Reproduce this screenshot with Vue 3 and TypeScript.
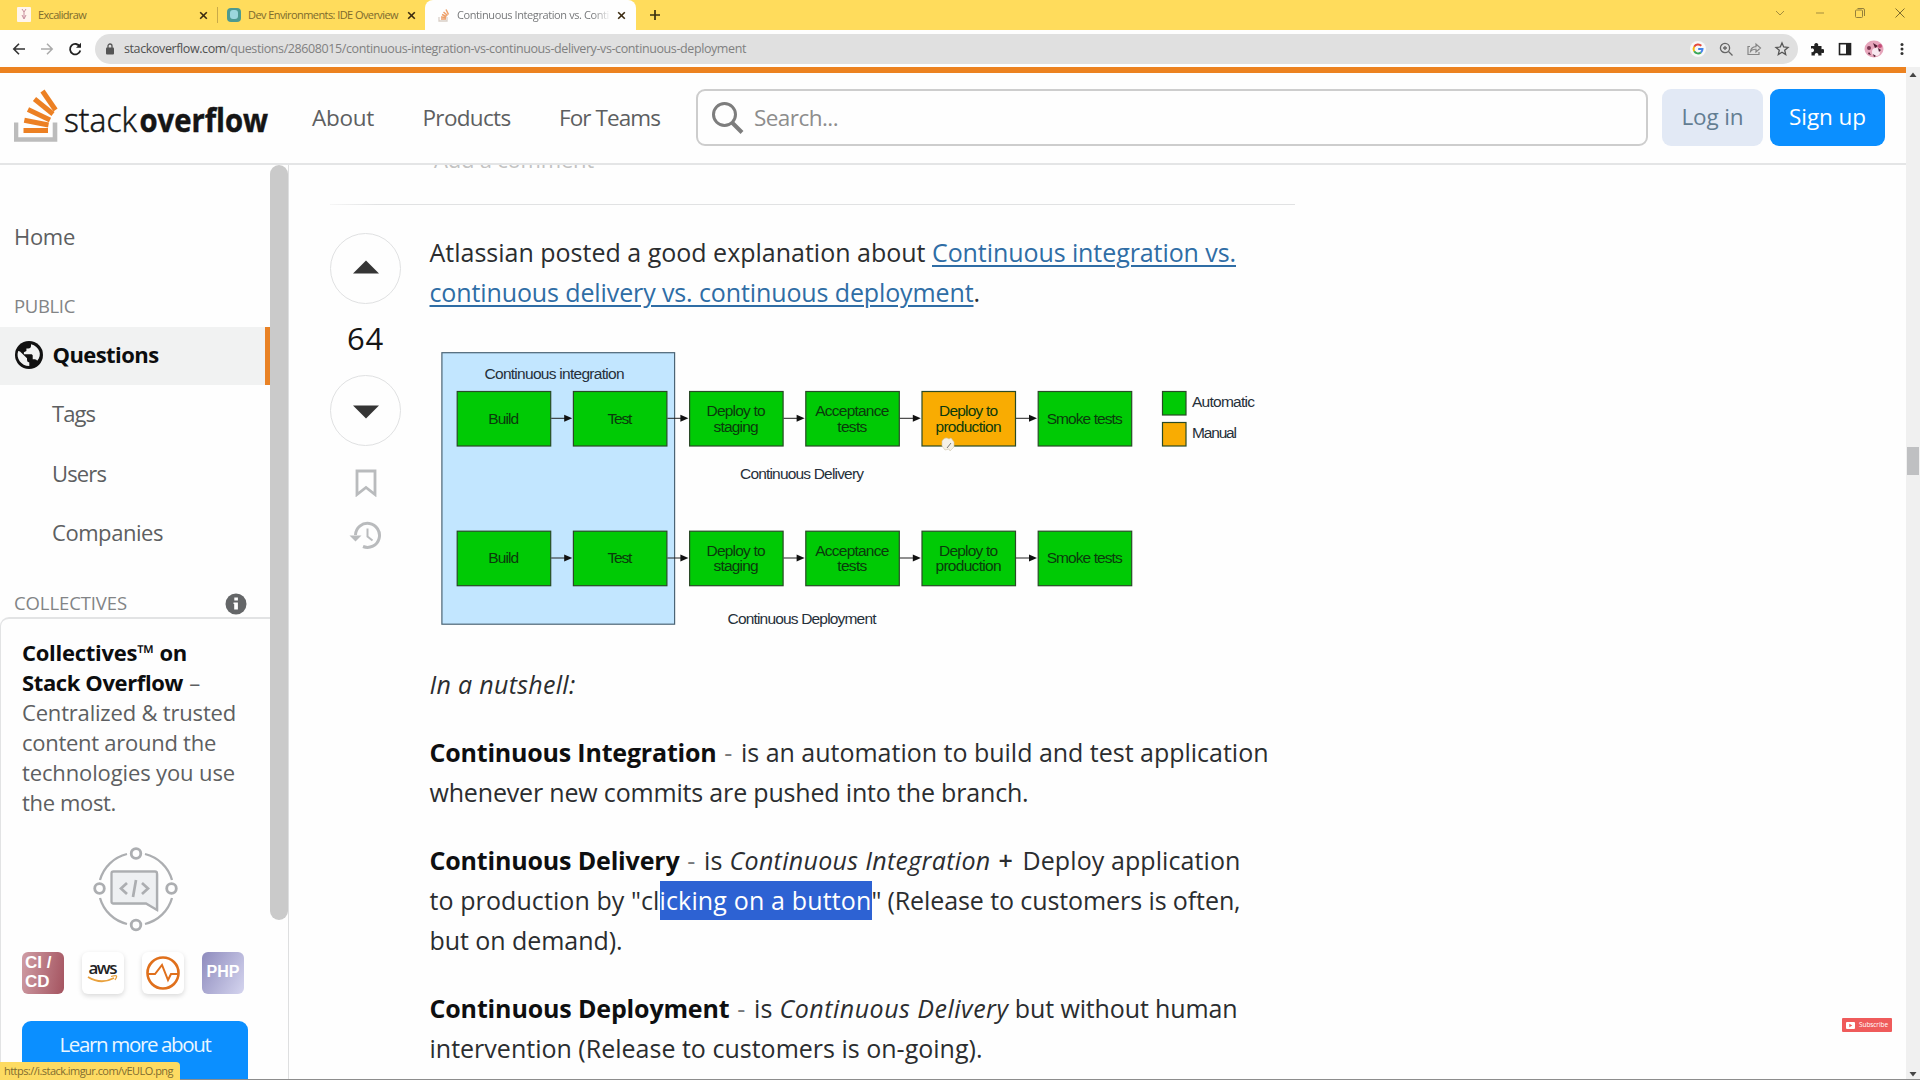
<script setup lang="ts">
import type { Directive } from 'vue'

// Tracks a run of text so that it fills the given measure in pixels.
const vFit: Directive<HTMLElement, number> = {
  mounted(el, { value }) {
    const natural = el.getBoundingClientRect().width
    const count = (el.textContent ?? '').length
    if (count > 0) el.style.letterSpacing = `${(value - natural) / count}px`
  },
}

interface Run { text: string; width: number; kind?: 'b' | 'i' | 'a' | 'sel' | 'dash' | 'plus-sign' }
type Line = Run[]

const intro: Line[] = [
  [
    { text: 'Atlassian posted a good explanation about ', width: 502.5 },
    { text: 'Continuous integration vs.', width: 304, kind: 'a' },
  ],
  [
    { text: 'continuous delivery vs. continuous deployment', width: 544, kind: 'a' },
    { text: '.', width: 7 },
  ],
]

const paragraphs: Line[][] = [
  [[{ text: 'In a nutshell:', width: 146, kind: 'i' }]],
  [
    [
      { text: 'Continuous Integration', width: 287, kind: 'b' },
      { text: ' - ', width: 24.5, kind: 'dash' },
      { text: 'is an automation to build and test application', width: 527.5 },
    ],
    [{ text: 'whenever new commits are pushed into the branch.', width: 599 }],
  ],
  [
    [
      { text: 'Continuous Delivery', width: 250, kind: 'b' },
      { text: ' - ', width: 24.5, kind: 'dash' },
      { text: 'is ', width: 25.5 },
      { text: 'Continuous Integration', width: 261, kind: 'i' },
      { text: ' + ', width: 32, kind: 'plus-sign' },
      { text: 'Deploy application', width: 218 },
    ],
    [
      { text: 'to production by "cl', width: 230 },
      { text: 'icking on a button', width: 212, kind: 'sel' },
      { text: '" ', width: 16 },
      { text: '(Release to customers is often,', width: 353 },
    ],
    [{ text: 'but on demand).', width: 193 }],
  ],
  [
    [
      { text: 'Continuous Deployment', width: 300, kind: 'b' },
      { text: ' - ', width: 24.5, kind: 'dash' },
      { text: 'is ', width: 25.5 },
      { text: 'Continuous Delivery', width: 229, kind: 'i' },
      { text: ' but without human', width: 229 },
    ],
    [{ text: 'intervention (Release to customers is on-going).', width: 553 }],
  ],
]

const tabs = [
  { id: 'excalidraw', title: 'Excalidraw', width: 48 },
  { id: 'dev', title: 'Dev Environments: IDE Overview', width: 150 },
  { id: 'so', title: 'Continuous Integration vs. Conti', width: 152 },
]

const nav = [
  { label: 'About', width: 62 },
  { label: 'Products', width: 88 },
  { label: 'For Teams', width: 101 },
]

const subItems = [
  { label: 'Tags', width: 43 },
  { label: 'Users', width: 54 },
  { label: 'Companies', width: 111 },
]

interface Stage { lines: string[]; widths: number[] }
const stages: Stage[] = [
  { lines: ['Build'], widths: [31] },
  { lines: ['Test'], widths: [25] },
  { lines: ['Deploy to', 'staging'], widths: [59, 45] },
  { lines: ['Acceptance', 'tests'], widths: [74, 30] },
  { lines: ['Deploy to', 'production'], widths: [59, 66] },
  { lines: ['Smoke tests'], widths: [76] },
]
const rows = [
  { y: 51.5, manual: 4 },
  { y: 191.2, manual: -1 },
]
const stageX = (i: number) => 27.2 + i * 116.2
const lineY = (s: Stage, j: number) => (s.lines.length === 1 ? 32.3 : 24.6 + j * 15.7)
</script>

<template>
  <div class="screen">
    <div class="tabstrip">
      <div v-for="t in tabs" :key="t.id" class="tab" :class="t.id">
        <svg v-if="t.id === 'excalidraw'" class="fav" width="14" height="16" viewBox="0 0 14 16">
          <rect width="14" height="15" rx="1" fill="#fff5ee" />
          <path d="M5 2l2 3 2-3M7 5v6M5 8l2 4 2-4" stroke="#c88d9d" fill="none" />
        </svg>
        <svg v-else-if="t.id === 'dev'" class="fav" width="14" height="16" viewBox="0 0 14 16">
          <rect y="1" width="14" height="14" rx="4" fill="#4d9a91" />
          <rect x="3" y="3" width="8" height="9" rx="3" fill="#9bd7dd" />
        </svg>
        <svg v-else class="fav" width="12" height="14" viewBox="0 0 12 14">
          <path d="M1 9v4h8V9" stroke="#d9cfc8" stroke-width="1.3" fill="none" />
          <path d="M3 11h5M3 9l5 .6M4 6.5l4.5 2M5.500 4l4 3.500M8 1.500l2.500 5" stroke="#eda06a" stroke-width="1.500" />
        </svg>
        <div class="title"><span v-fit="t.width">{{ t.title }}</span></div>
        <svg class="x" width="9" height="9" viewBox="0 0 9 9"><path d="M1.200 1.200l6.600 6.600M7.800 1.200L1.200 7.800" stroke="#3a2a10" stroke-width="1.600" /></svg>
      </div>
      <svg class="plus" width="12" height="12" viewBox="0 0 12 12"><path d="M6 1v10M1 6h10" stroke="#3b3011" stroke-width="1.700" /></svg>
      <div class="window-buttons">
        <svg width="12" height="12" viewBox="0 0 12 12"><path d="M2 4l4 4 4-4" fill="none" stroke="#a58d3c" /></svg>
        <svg width="12" height="12" viewBox="0 0 12 12"><path d="M2 6h8" stroke="#a58d3c" /></svg>
        <svg width="12" height="12" viewBox="0 0 12 12"><rect x="1.500" y="3" width="7" height="7.500" rx="1" fill="none" stroke="#94803b" /><path d="M3.500 1.500h5.500q1.500 0 1.500 1.500v6" fill="none" stroke="#94803b" /></svg>
        <svg width="12" height="12" viewBox="0 0 12 12"><path d="M1.500 1.500l9 9M10.500 1.500l-9 9" stroke="#806d2c" /></svg>
      </div>
    </div>

    <div class="toolbar">
      <svg class="nav-icon" width="14" height="14" viewBox="0 0 14 14"><path d="M13 7H2M7 1.800L1.800 7 7 12.200" fill="none" stroke="#333" stroke-width="1.600" /></svg>
      <svg class="nav-icon" width="14" height="14" viewBox="0 0 14 14"><path d="M1 7h11M7 1.800L12.200 7 7 12.200" fill="none" stroke="#aaa" stroke-width="1.500" /></svg>
      <svg class="nav-icon" width="14" height="14" viewBox="0 0 14 14"><path d="M11.800 4.600A5.200 5.200 0 1 0 12.300 8.500" fill="none" stroke="#222" stroke-width="1.800" /><path d="M13 .8v5H8z" fill="#222" /></svg>
      <div class="address">
        <svg width="10" height="12" viewBox="0 0 10 12"><rect x="1" y="4.500" width="8" height="7" rx="1" fill="#555" /><path d="M3 5V3a2 2 0 0 1 4 0v2" stroke="#555" stroke-width="1.300" fill="none" /></svg>
        <div class="url"><span v-fit="102" class="host">stackoverflow.com</span><span v-fit="520">/questions/28608015/continuous-integration-vs-continuous-delivery-vs-continuous-deployment</span></div>
        <div class="address-actions">
          <svg width="16" height="16" viewBox="0 0 16 16"><circle cx="8" cy="8" r="8" fill="#f8f8f8" /><g fill="none" stroke-width="2"><path d="M11.300 4.800A4.500 4.500 0 0 0 4.200 5.700" stroke="#e5483b" /><path d="M4.200 5.700a4.500 4.500 0 0 0 0 4.600" stroke="#f5b912" /><path d="M4.200 10.300a4.500 4.500 0 0 0 6.700 1.100" stroke="#39a657" /><path d="M10.900 11.400A4.500 4.500 0 0 0 12.500 8H8.200" stroke="#4583ea" /></g></svg>
          <svg width="16" height="16" viewBox="0 0 16 16" fill="none" stroke="#666" stroke-width="1.300"><circle cx="7" cy="7" r="4.600" /><path d="M10.500 10.500l4 4M5 7h4M7 5v4" /></svg>
          <svg width="16" height="16" viewBox="0 0 16 16" fill="none" stroke="#858585" stroke-width="1.200"><path d="M4 5.500H2v8h11V11" /><path d="M4.500 10.500Q5 6 10 5.700V3l4.500 4-4.500 4V8.300Q6.500 8 4.500 10.500z" /></svg>
          <svg width="16" height="16" viewBox="0 0 16 16" fill="none" stroke="#555" stroke-width="1.300"><path d="M8 2l1.700 4 4.300.4-3.300 2.800 1 4.300L8 11.200l-3.700 2.300 1-4.300L2 6.400 6.300 6z" /></svg>
        </div>
      </div>
      <div class="extensions">
        <svg width="14" height="14" viewBox="0 0 14 14"><path d="M1 4h3.500a2 2 0 1 1 3.500 0h3.500v3.300a2 2 0 1 1 0 3.400V13.500H8.200a1.800 1.800 0 1 0-3.300 0H1.500V10a1.900 1.900 0 1 0-.5-3.300z" fill="#222" /></svg>
        <svg width="14" height="14" viewBox="0 0 14 14"><rect x="1.500" y="1.700" width="11" height="10.800" fill="none" stroke="#222" stroke-width="1.600" /><path d="M8 1.500h4.500v11H8z" fill="#222" /></svg>
        <svg width="20" height="18" viewBox="0 0 20 18"><ellipse cx="10" cy="9" rx="9.500" ry="8.500" fill="#e6a5bb" /><circle cx="5" cy="8" r="2" fill="#7b3651" /><circle cx="12" cy="12" r="4" fill="#f8e9f0" /><path d="M9 3l5 3-3 2zM9 14l3 2-2 1zM14 8l3 2-2 2zM5 12l2 3-3-1z" fill="#4e1c32" /><circle cx="16" cy="6" r="2" fill="#c54d78" /></svg>
        <svg width="6" height="14" viewBox="0 0 6 14" fill="#333"><circle cx="3" cy="2.500" r="1.500" /><circle cx="3" cy="7" r="1.500" /><circle cx="3" cy="11.500" r="1.500" /></svg>
      </div>
    </div>

    <div class="viewport">
      <div class="page">
        <header class="topbar">
          <svg class="logo" width="260" height="60" viewBox="0 0 260 60">
            <path d="M2 35.500V52.500H41V35.500" fill="none" stroke="#bcbcbc" stroke-width="4.600" />
            <g stroke="#ec8023" stroke-width="5">
              <path d="M9.500 43.500H34" /><path d="M10.300 33.300L34.500 38" /><path d="M14 22.500L36 33" /><path d="M20.500 12L39 27" /><path d="M28.500 4L41.500 23" />
            </g>
            <text x="50" y="44.800" textLength="73" lengthAdjust="spacingAndGlyphs" class="logo-text">stack</text>
            <text x="125.500" y="44.800" textLength="128.500" lengthAdjust="spacingAndGlyphs" class="logo-text heavy">overflow</text>
          </svg>
          <nav class="nav">
            <a v-for="n in nav" :key="n.label"><span v-fit="n.width">{{ n.label }}</span></a>
          </nav>
          <div class="search">
            <svg width="34" height="34" viewBox="0 0 34 34" fill="none" stroke="#7d7d7d"><circle cx="13.500" cy="13.500" r="11" stroke-width="3" /><path d="M21 21.500l10 10" stroke-width="4" /></svg>
            <div><span v-fit="84">Search...</span></div>
          </div>
          <div class="btn login"><span v-fit="62">Log in</span></div>
          <div class="btn signup"><span v-fit="77">Sign up</span></div>
        </header>

        <div class="body">
          <aside class="sidebar">
            <div class="side-content">
              <div class="item home"><span v-fit="61">Home</span></div>
              <div class="heading"><span v-fit="61">PUBLIC</span></div>
              <div class="item questions">
                <svg width="28" height="28" viewBox="0 0 28 28"><circle cx="14" cy="14" r="14" fill="#111" /><path d="M5 10.500l7 6.800v1.700a2.600 2.600 0 0 0 2.300 2.600v3.400C6 25 .6 17 3.200 10zM16 3.200v1.600a2.600 2.600 0 0 1-2.600 2.600h-2v2.600l-2.500 1.200v2h7.800l1 1v4h2.200q1.700 0 2.300 1.600C27.600 14 24.500 5.300 16 3.200z" fill="#f1f2f2" /></svg>
                <div><span v-fit="106">Questions</span></div>
              </div>
              <div v-for="s in subItems" :key="s.label" class="item sub"><span v-fit="s.width">{{ s.label }}</span></div>
              <div class="heading collectives">
                <div><span v-fit="113">COLLECTIVES</span></div>
                <svg width="22" height="22" viewBox="0 0 22 22"><circle cx="11" cy="11" r="10.500" fill="#646668" /><path d="M9.300 4.500h3.600v3H9.300zM8.500 9.500h4.400v7H9.200V11h-.7z" fill="#fff" /></svg>
              </div>
              <section class="card">
                <div class="blurb">
                  <div><b v-fit="165">Collectives™ on</b></div>
                  <div><b v-fit="161">Stack Overflow</b><span v-fit="18"> –</span></div>
                  <div><span v-fit="214">Centralized &amp; trusted</span></div>
                  <div><span v-fit="194">content around the</span></div>
                  <div><span v-fit="213">technologies you use</span></div>
                  <div><span v-fit="94">the most.</span></div>
                </div>
                <svg class="illustration" width="86" height="86" viewBox="0 0 86 86" fill="none" stroke="#acaeb1" stroke-width="2.300">
                  <path d="M52 8A37 37 0 0 1 79 34M79 52A37 37 0 0 1 52 78M34 78A37 37 0 0 1 7 52M7 34A37 37 0 0 1 34 8" />
                  <circle cx="43" cy="7.500" r="4.800" stroke-width="2.800" /><circle cx="43" cy="79" r="4.800" stroke-width="2.800" /><circle cx="6.500" cy="42.500" r="4.800" stroke-width="2.800" /><circle cx="78.500" cy="42.500" r="4.800" stroke-width="2.800" />
                  <path d="M20 27h44q2 0 2 2v36l-12-6H22q-3 0-3-2V29q0-2 2-2z" fill="#eef0f2" stroke="none" />
                  <path d="M20.500 25.500H62q2 0 2 2V64l-11-6.500H20.500q-2 0-2-2v-28q0-2 2-2z" />
                  <path d="M34 37l-6 5.500 6 5.500M49 37l6 5.500-6 5.500M43 34l-3 17" stroke-width="2.700" />
                </svg>
                <div class="badges">
                  <div class="badge cicd"><span>CI /</span><span>CD</span></div>
                  <div class="badge plain"><svg width="32" height="26" viewBox="0 0 32 26"><text x="1.500" y="13.500" textLength="29" class="aws">aws</text><path d="M1 17q13 8 26 1" fill="none" stroke="#e9a13d" stroke-width="1.800" /><path d="M24 16.500q5-1.500 5.500-.5t-1.500 4" fill="none" stroke="#e9a13d" stroke-width="1.300" /></svg></div>
                  <div class="badge plain"><svg width="34" height="34" viewBox="0 0 34 34" fill="none" stroke="#e0701c"><circle cx="17" cy="17" r="15.500" stroke-width="2.600" /><path d="M2 18h7l7-9 6 15 3-6h7" stroke-width="2" /></svg></div>
                  <div class="badge php"><span>PHP</span></div>
                </div>
                <div class="learn">
                  <div><span v-fit="151">Learn more about</span></div>
                  <div><span v-fit="86">Collectives</span></div>
                </div>
              </section>
            </div>
            <div class="side-scroll"><i></i></div>
          </aside>

          <main class="main">
            <div class="comment"><span v-fit="160">Add a comment</span></div>
            <div class="rule"></div>
            <article class="answer">
              <div class="votes">
                <div class="vote"><svg width="28" height="14" viewBox="0 0 28 14"><path d="M1 13.500L14 .5l13 13z" fill="#353535" /></svg></div>
                <div class="score"><span v-fit="37">64</span></div>
                <div class="vote"><svg width="28" height="14" viewBox="0 0 28 14"><path d="M1 .5h26l-13 13z" fill="#353535" /></svg></div>
                <svg class="bookmark" width="22" height="28" viewBox="0 0 22 28"><path d="M2 2h18v23.500l-9-7-9 7z" fill="none" stroke="#b9bbbd" stroke-width="2.800" /></svg>
                <svg class="history" width="34" height="28" viewBox="0 0 34 28"><path d="M6.500 14A12 12 0 1 1 14 25.500" fill="none" stroke="#b9bbbd" stroke-width="3" /><path d="M.5 14.500h12l-6 6z" fill="#b9bbbd" /><path d="M18.500 7.500v8l5 4" fill="none" stroke="#b9bbbd" stroke-width="2" /></svg>
              </div>
              <div class="post">
                <div class="para">
                  <div v-for="(line, i) in intro" :key="i" class="line"><span v-for="(r, j) in line" :key="j" v-fit="r.width" :class="r.kind">{{ r.text }}</span></div>
                </div>
                <svg class="diagram" width="840" height="310" viewBox="0 0 840 310">
                  <rect x="11.900" y="12.700" width="232.700" height="271.500" fill="#c2e6ff" stroke="#4b6475" stroke-width="1.200" />
                  <text x="54.500" y="38.700" textLength="140">Continuous integration</text>
                  <g v-for="row in rows" :key="row.y" :transform="`translate(0 ${row.y})`">
                    <g v-for="(s, i) in stages" :key="i" :transform="`translate(${stageX(i)} 0)`">
                      <rect width="93.500" height="54.500" :fill="i === row.manual ? '#f9ac02' : '#00ca05'" stroke="#294a26" stroke-width="1.200" />
                      <text v-for="(l, j) in s.lines" :key="j" x="46.500" :y="lineY(s, j)" :textLength="s.widths[j]" text-anchor="middle" class="stage">{{ l }}</text>
                      <template v-if="i < 5">
                        <path d="M94 26.800h17" stroke="#222" />
                        <path d="M107 23.300l8 3.500-8 3.500z" fill="#111" />
                      </template>
                    </g>
                  </g>
                  <text x="310" y="138.800" textLength="124">Continuous Delivery</text>
                  <text x="297.500" y="284" textLength="149">Continuous Deployment</text>
                  <g stroke="#294a26" stroke-width="1.200">
                    <rect x="732.500" y="51.500" width="23.500" height="23.500" fill="#00ca05" />
                    <rect x="732.500" y="82.500" width="23.500" height="23.500" fill="#f9ac02" />
                  </g>
                  <text x="762" y="67" textLength="63">Automatic</text>
                  <text x="762" y="98" textLength="45">Manual</text>
                  <path d="M512 101q3-5 7-2l2-1 3 4v5l-4 4-1-2-4 1-3-4z" fill="#f5f1e6" stroke="#cfc6ac" stroke-width=".6" />
                  <path d="M517 108l4-5" stroke="#777" />
                </svg>
                <div v-for="(p, k) in paragraphs" :key="k" class="para">
                  <div v-for="(line, i) in p" :key="i" class="line"><span v-for="(r, j) in line" :key="j" v-fit="r.width" :class="r.kind">{{ r.text }}</span></div>
                </div>
              </div>
            </article>
          </main>
        </div>
      </div>
      <div class="scrollbar">
        <svg width="8" height="5" viewBox="0 0 8 5"><path d="M.500 5L4 .5 7.500 5z" fill="#444" /></svg>
        <i></i>
        <svg width="8" height="5" viewBox="0 0 8 5"><path d="M.500 0L4 4.500 7.500 0z" fill="#444" /></svg>
      </div>
    </div>

    <div class="edge"></div>
    <div class="status"><span v-fit="169">https://i.stack.imgur.com/vEULO.png</span></div>
    <div class="subscribe">
      <svg width="9" height="7" viewBox="0 0 9 7"><rect width="9" height="7" rx="1" fill="#fff" /><path d="M3.300 1.700v3.600L6.300 3.500z" fill="#ef5b5b" /></svg>
      <div><span v-fit="29">Subscribe</span></div>
    </div>
  </div>
</template>

<style>
body { margin: 0; overflow: hidden; background: #fefefe; }
</style>

<style scoped>
.screen { position: relative; display: flex; flex-direction: column; width: 1920px; height: 1080px; overflow: hidden; background: #fefefe; color: #5d5f61; font-family: "Open Sans", "Noto Sans", sans-serif; white-space: pre; }
svg { display: block; flex: none; }

.tabstrip { display: flex; height: 30px; background: #ffdc5c; font-size: 11px; line-height: 30px; color: #7d6a2d; }
.tab { display: flex; align-items: center; box-sizing: border-box; height: 30px; }
.tab .title { flex: 1; overflow: hidden; }
.tab .x { margin-right: 9px; }
.excalidraw { width: 218px; padding-left: 17px; background: linear-gradient(#c9aa49, #c9aa49) right center / 1px 16px no-repeat; }
.excalidraw .title { margin-left: 7px; }
.excalidraw .x { margin-right: 10px; }
.dev { width: 207px; padding-left: 9px; }
.dev .title { margin-left: 7px; }
.so { width: 211px; padding-left: 13px; border-radius: 8px 8px 0 0; background: #fefefe; color: #77797b; }
.so .title { flex: 0 0 154px; margin: 0 6px 0 7px; -webkit-mask-image: linear-gradient(90deg, #000 88%, transparent); mask-image: linear-gradient(90deg, #000 88%, transparent); }
.so .x { margin: 0; }
.plus { margin: 9px 0 0 13px; }
.window-buttons { display: flex; gap: 28px; margin: 7px 14px 0 auto; }

.toolbar { display: flex; align-items: center; height: 37px; box-sizing: border-box; padding-left: 12px; }
.nav-icon { margin-right: 14px; }
.address { display: flex; align-items: center; box-sizing: border-box; width: 1703px; height: 30px; margin-left: -1px; padding: 0 8px 0 10px; border-radius: 15px; background: #e0e0e0; }
.url { margin-left: 9px; font-size: 12.5px; line-height: 30px; color: #808080; }
.host { color: #505050; }
.address-actions { display: flex; gap: 12px; margin-left: auto; }
.extensions { display: flex; align-items: center; gap: 12px; margin-left: 12px; }
.extensions svg:nth-child(2) { margin-left: 2px; }
.extensions svg:last-child { margin-left: 3px; }

.viewport { display: flex; height: 1013px; }
.page { display: flex; flex-direction: column; width: 1906px; }
.topbar { display: flex; align-items: center; box-sizing: border-box; height: 98px; padding-bottom: 1px; border-top: 6px solid #ec8220; border-bottom: 2px solid #e4e5e6; font-size: 22.5px; line-height: 55px; }
.logo { margin: 0 0 2px 14px; }
.logo-text { font: 300 33px "Open Sans", sans-serif; fill: #151515; stroke: #151515; stroke-width: .5; }
.logo-text.heavy { font-weight: 700; }
.nav { display: flex; gap: 48.5px; box-sizing: border-box; width: 422px; padding-left: 38px; }
.search { display: flex; align-items: center; box-sizing: border-box; width: 952px; height: 57px; padding-left: 13px; border: 2px solid #cdcdcd; border-radius: 9px; color: #8d8d8d; }
.search svg { margin-right: 9px; }
.search div { margin-top: -1px; }
.btn { height: 57px; border-radius: 9px; line-height: 56px; text-align: center; }
.login { width: 101px; margin-left: 14px; background: #e2e9f5; color: #627d92; }
.signup { width: 115px; margin-left: 7px; background: #0b8fff; color: #fff; }

.body { display: flex; height: 915px; overflow: hidden; }
.sidebar { display: flex; box-sizing: border-box; width: 289px; border-right: 1px solid #dedfe0; }
.side-content { width: 270px; }
.side-scroll { width: 18px; }
.side-scroll i { display: block; height: 755px; border-radius: 9px; background: #cacaca; }
.item { font-size: 22px; }
.home { margin-top: 42px; padding-left: 14px; line-height: 58px; }
.heading { margin-top: 26px; padding-left: 14px; font-size: 18.5px; line-height: 30px; color: #828486; }
.questions { display: flex; align-items: center; box-sizing: border-box; height: 58px; margin-top: 6px; padding: 0 0 3px 15px; border-right: 5px solid #e98225; background: #f1f2f2; color: #0c0d0e; font-weight: 700; }
.questions div { margin: -1px 0 0 9.5px; }
.sub { padding-left: 52px; height: 59.5px; line-height: 57px; }
.collectives { display: flex; align-items: center; height: 28px; margin-top: 25px; }
.collectives svg { margin-left: 98px; margin-top: 2px; }
.card { box-sizing: border-box; height: 480px; padding: 18.5px 0 0 21px; border: solid #e2e3e4; border-width: 2px 0 0 1px; border-radius: 9px 0 0 0; }
.blurb { height: 182.5px; font-size: 22px; line-height: 30.1px; }
.blurb b { color: #0c0d0e; }
.illustration { margin: 26px 0 20px 71px; }
.badges { display: flex; gap: 18px; height: 42px; }
.badge { display: flex; flex-direction: column; justify-content: center; align-items: center; width: 42px; height: 42px; border-radius: 6px; font: 700 17px/18.5px "Liberation Sans", sans-serif; color: #fff; }
.plain { background: #fff; box-shadow: 0 2px 5px #d9d9d9; }
.cicd { align-items: flex-start; box-sizing: border-box; padding-left: 3px; background: linear-gradient(100deg, #cf9da5, #a4535f); }
.php { background: linear-gradient(120deg, #8e8bbd, #d5d5ef); font-size: 16px; }
.aws { font: 600 17px "Open Sans", sans-serif; fill: #222; }
.learn { box-sizing: border-box; width: 226px; height: 80px; margin-top: 27px; padding-top: 8.5px; border-radius: 9px; background: #0b8fff; color: #e9f6ff; font-size: 20.5px; line-height: 30px; text-align: center; }

.main { width: 1006px; }
.comment { height: 39px; overflow: hidden; padding-left: 145px; font-size: 22px; line-height: 0; color: #c2c2c2; }
.comment span { display: inline-block; height: 20px; margin-top: -17px; line-height: 23px; vertical-align: top; }
.rule { width: 965px; height: 1px; margin-left: 41px; background: linear-gradient(90deg, #f6f6f6, #e1e2e3 5%); }
.answer { display: flex; padding-left: 41px; }
.votes { display: flex; flex-direction: column; align-items: center; width: 71px; padding-top: 28px; }
.vote { display: flex; align-items: center; justify-content: center; box-sizing: border-box; width: 71px; height: 71px; border: 1.5px solid #e0e1e2; border-radius: 50%; }
.votes .vote:first-child svg { margin-top: -3px; }
.votes .vote:nth-child(3) svg { margin-top: 3px; }
.score { height: 71px; font-size: 31px; line-height: 69px; font-weight: 500; color: #151515; }
.bookmark { margin-top: 23px; }
.history { margin-top: 24px; }
.post { margin-left: 28.5px; padding-top: 28px; font-size: 25px; color: #2b2d2f; }
.line { height: 39.7px; line-height: 39.7px; }
.para { margin-bottom: 28.6px; }
.diagram { margin: -1.4px 0 15.5px .5px; }
.diagram text { font: 15.5px "Liberation Sans", Arial, sans-serif; fill: #26303a; }
.diagram .stage { fill: #0b3a0c; }
.b { font-weight: 700; color: #0e0f10; }
.i { font-style: italic; }
.a { color: #2f6da5; text-decoration: underline; text-decoration-thickness: 2px; text-underline-offset: 3px; }
.dash { color: #77797b; }
.plus-sign { font-weight: 600; }
.sel { display: inline-block; height: 39px; background: #2d62d3; color: #fff; }

.scrollbar { display: flex; flex-direction: column; align-items: center; justify-content: space-between; box-sizing: border-box; width: 14px; padding: 5px 0 3px; background: #f0f0f0; }
.scrollbar i { width: 12px; height: 28px; margin-bottom: 228px; background: #bfc0c2; }

.edge { position: absolute; left: 0; right: 0; bottom: 0; height: 1.5px; background: #8d8d8d; }
.status { position: absolute; left: 0; bottom: 0; width: 176px; height: 18px; padding-left: 4px; border-radius: 0 4px 0 0; background: #fddb62; color: #806c30; font-size: 11px; line-height: 17px; }
.subscribe { position: absolute; left: 1842px; top: 1018px; display: flex; align-items: center; box-sizing: border-box; width: 50px; height: 14px; padding-left: 4px; border-radius: 1px; background: #ef5b5b; color: #fff; font-size: 6.5px; line-height: 14px; }
.subscribe div { margin-left: 4px; }
</style>
